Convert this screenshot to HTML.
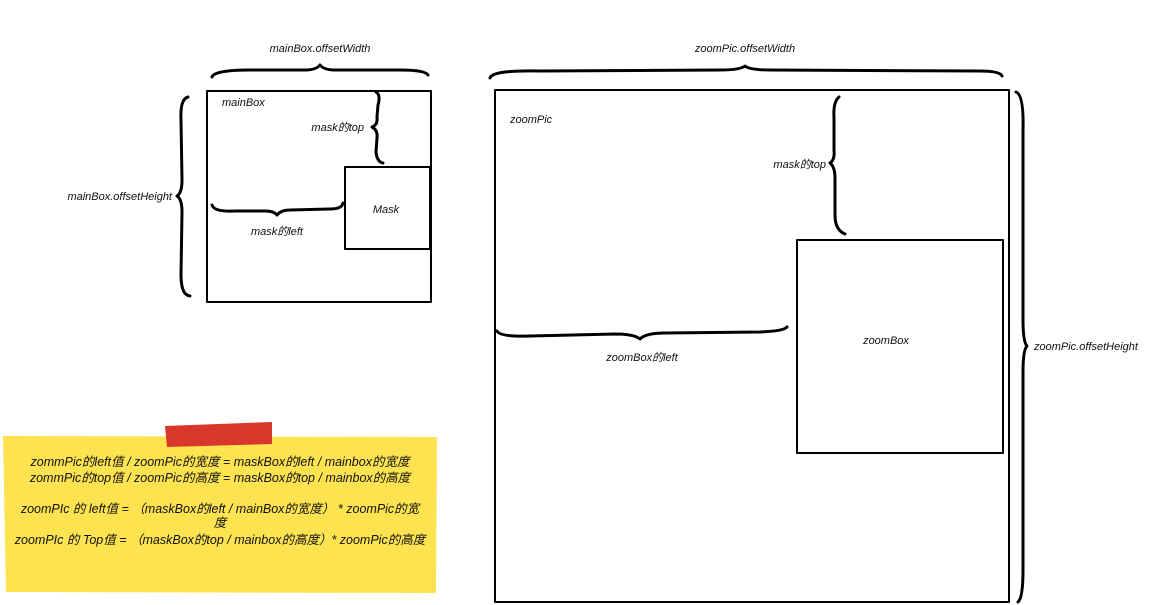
<!DOCTYPE html>
<html><head><meta charset="utf-8">
<style>
html,body{margin:0;padding:0;background:#fff;}
svg{display:block}
text{font-family:"Liberation Sans","Noto Sans CJK SC",sans-serif;font-size:11px;font-style:italic;fill:#111}
.n{font-size:12.5px;font-style:italic}
</style></head><body>
<svg width="1152" height="605" viewBox="0 0 1152 605" xmlns="http://www.w3.org/2000/svg">
<g fill="none" stroke="#000" stroke-linecap="round" stroke-linejoin="round">
<rect x="207" y="91" width="224" height="211" stroke-width="2"/>
<rect x="345" y="167" width="85" height="82" stroke-width="2"/>
<rect x="495" y="90" width="514" height="512" stroke-width="2"/>
<rect x="797" y="240" width="206" height="213" stroke-width="2"/>
<path d="M212 77 Q214 70 250 70 L305 70 Q316 70 320 65 Q324 70 335 70 L400 70 Q425 70 428 75" stroke-width="3"/>
<path d="M188 97 Q180 99 181 120 L182 180 Q182 193 177 196 Q182 199 182 212 L181 275 Q181 295 190 296" stroke-width="3"/>
<path d="M376 92 Q381 95 378 105 L377 117 Q378 125 372 127 Q378 130 377 138 L376 152 Q377 162 383 163" stroke-width="3"/>
<path d="M212 205 Q214 212 235 211 L265 211 Q274 211 277 215 Q281 210 290 210 L330 209 Q342 209 343 203" stroke-width="3"/>
<path d="M490 78 Q492 70 540 71 L720 70 Q740 70 745 66 Q750 70 770 70 L980 71 Q1000 71 1002 76" stroke-width="3"/>
<path d="M1016 92 Q1024 95 1023 130 L1023 320 Q1023 342 1027 346 Q1023 350 1023 372 L1023 570 Q1023 598 1018 602" stroke-width="3"/>
<path d="M839 97 Q833 102 834 118 L834 150 Q835 160 830 163 Q835 167 835 178 L835 215 Q835 230 845 234" stroke-width="3"/>
<path d="M497 331 Q500 337 530 336 L615 334 Q634 334 640 339 Q646 333 665 333 L760 332 Q784 331 787 327" stroke-width="3"/>
</g>
<path d="M3 436 L437 437 L436 593 L6 592 Z" fill="#fde34f"/>
<path d="M165 426 L272 422 L272 444 L167 447 Z" fill="#d9362c"/>
<text x="320" y="52" text-anchor="middle">mainBox.offsetWidth</text>
<text x="172" y="200" text-anchor="end">mainBox.offsetHeight</text>
<text x="222" y="106">mainBox</text>
<text x="364" y="131" text-anchor="end">mask的top</text>
<text x="277" y="235" text-anchor="middle">mask的left</text>
<text x="386" y="213" text-anchor="middle">Mask</text>
<text x="745" y="52" text-anchor="middle">zoomPic.offsetWidth</text>
<text x="510" y="123">zoomPic</text>
<text x="826" y="168" text-anchor="end">mask的top</text>
<text x="642" y="361" text-anchor="middle">zoomBox的left</text>
<text x="886" y="344" text-anchor="middle">zoomBox</text>
<text x="1034" y="350">zoomPic.offsetHeight</text>
<text class="n" x="220" y="466" text-anchor="middle">zommPic的left值 / zoomPic的宽度 = maskBox的left / mainbox的宽度</text>
<text class="n" x="220" y="482" text-anchor="middle">zommPic的top值 / zoomPic的高度 = maskBox的top / mainbox的高度</text>
<text class="n" x="220" y="513" text-anchor="middle">zoomPIc 的 left值 = （maskBox的left / mainBox的宽度） * zoomPic的宽</text>
<text class="n" x="220" y="527" text-anchor="middle">度</text>
<text class="n" x="220" y="544" text-anchor="middle">zoomPIc 的 Top值 = （maskBox的top / mainbox的高度）* zoomPic的高度</text>
</svg>
</body></html>
